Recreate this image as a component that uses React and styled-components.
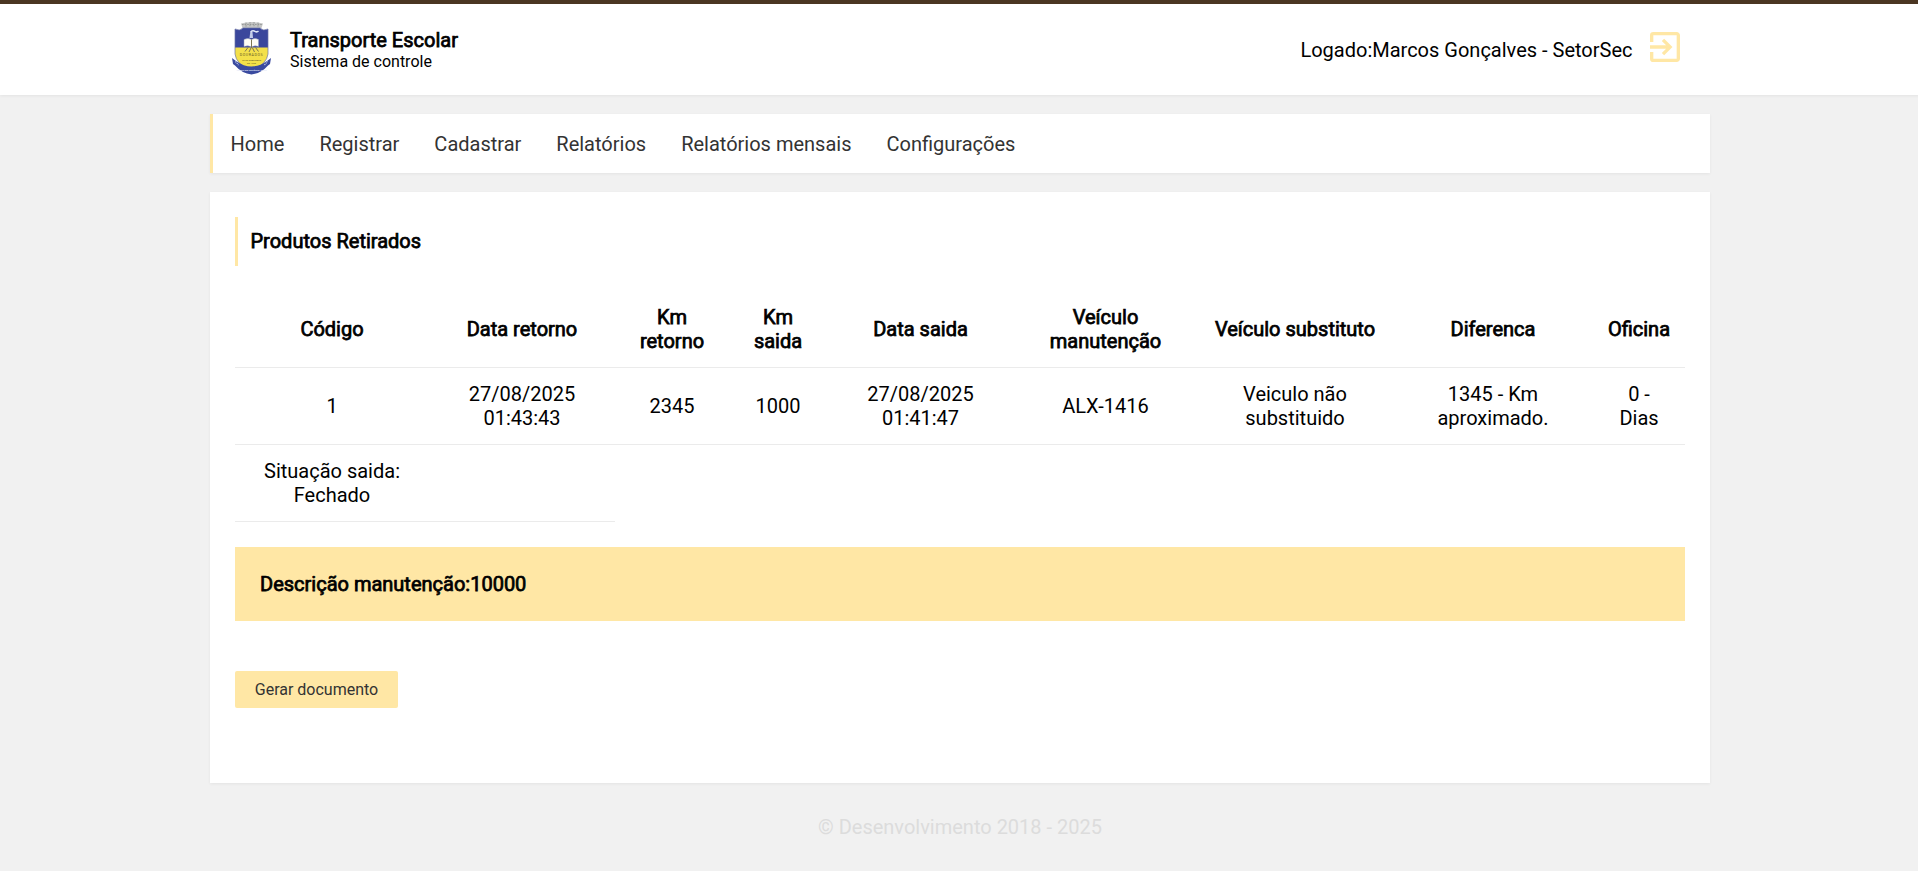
import React from "react";
import styled, { createGlobalStyle } from "styled-components";
import { MdExitToApp } from "react-icons/md";

const colors = {
  brown: "#4b3622",
  accent: "#ffe7a5",
  page: "#f1f1f1",
  line: "#ebebeb",
};

const GlobalStyle = createGlobalStyle`
  * { box-sizing: border-box; margin: 0; padding: 0; }
  html, body { background: ${colors.page}; overflow: hidden; }
  body {
    font-family: Roboto, "Liberation Sans", sans-serif;
    font-size: 20px;
    line-height: 24px;
    color: #000;
  }
`;

const Page = styled.div`
  width: 1920px;
  min-height: 871px;
`;

const Container = styled.div`
  width: 1500px;
  margin: 0 auto;
`;

const Header = styled.header`
  height: 95px;
  background: #fff;
  border-top: 4px solid ${colors.brown};
  box-shadow: 0 1px 3px rgba(0, 0, 0, 0.06);
`;

const HeaderRow = styled(Container)`
  display: flex;
  justify-content: space-between;
  align-items: flex-start;
  padding: 0 25px 0 20px;
`;

const Brand = styled.div`
  display: flex;
  gap: 16px;
  padding-top: 16px;
`;

const Crest = styled.svg`
  width: 44px;
  height: 56px;
`;

const Strong = styled.strong`
  font-weight: 400;
  -webkit-text-stroke: 0.75px currentColor;
`;

const BrandText = styled.div`
  padding-top: 8px;
  strong { display: block; }
`;

const BrandSub = styled.span`
  display: block;
  font-size: 16px;
  line-height: 19px;
`;

const User = styled.div`
  display: flex;
  gap: 12.5px;
  padding-top: 23px;
`;

const UserName = styled.span`
  padding-top: 11px;
`;

const ExitIcon = styled(MdExitToApp)`
  width: 40px;
  height: 40px;
  color: ${colors.accent};
`;

const Panel = styled(Container)`
  margin-top: 19px;
  background: #fff;
  box-shadow: 0 1px 3px rgba(0, 0, 0, 0.06);
`;

const Nav = styled(Panel).attrs({ as: "nav" })`
  display: flex;
  align-items: center;
  gap: 35px;
  height: 59px;
  padding-left: 17.6px;
  border-left: 3px solid ${colors.accent};
`;

const NavLink = styled.a`
  color: #333;
`;

const Content = styled(Panel).attrs({ as: "main" })`
  height: 591px;
  padding: 25px;
`;

const Title = styled.h1`
  height: 49px;
  padding: 12px 12.5px;
  border-left: 3px solid ${colors.accent};
  font-size: 20px;
  font-weight: 400;
`;

const Table = styled.table`
  width: 1450px;
  margin-top: 25px;
  table-layout: fixed;
  border-spacing: 0;
  text-align: center;
`;

const Cell = styled.td`
  height: 77px;
  vertical-align: middle;
  font-weight: 400;
  white-space: pre-line;
  border-bottom: 1px solid ${colors.line};
`;

const Description = styled.div`
  height: 74px;
  margin-top: 25px;
  padding: 25px;
  background: ${colors.accent};
`;

const Button = styled.button`
  display: block;
  width: 163px;
  height: 37px;
  margin-top: 50px;
  border: 0;
  border-radius: 2px;
  background: ${colors.accent};
  color: #333;
  font: 16px Roboto, "Liberation Sans", sans-serif;
`;

const Footer = styled.footer`
  margin-top: 32px;
  text-align: center;
  color: #dcdcdc;
`;

const links = ["Home", "Registrar", "Cadastrar", "Relatórios", "Relatórios mensais", "Configurações"];

const columns = [
  { width: 194, title: "Código", value: "1" },
  { width: 186, title: "Data retorno", value: "27/08/2025\n01:43:43" },
  { width: 114, title: "Km\nretorno", value: "2345" },
  { width: 98, title: "Km\nsaida", value: "1000" },
  { width: 187, title: "Data saida", value: "27/08/2025\n01:41:47" },
  { width: 183, title: "Veículo\nmanutenção", value: "ALX-1416" },
  { width: 196, title: "Veículo substituto", value: "Veiculo não\nsubstituido" },
  { width: 200, title: "Diferenca", value: "1345 - Km\naproximado." },
  { width: 92, title: "Oficina", value: "0 -\nDias" },
];

function CityCrest() {
  return (
    <Crest viewBox="0 0 44 56" aria-label="Brasão">
      <path d="M11 3.5 L16 2.5 L22 2 L28 2.5 L33 3.5 L31.5 8 H12.5 Z" fill="#c4c5c4" />
      <path d="M12 4.5 H32 M16 2.5 V7 M20 2 V7 M24 2 V7 M28 2.5 V7" stroke="#8b8f8e" strokeWidth="0.8" strokeDasharray="1.6 1" />
      <path d="M5 9 Q10 11.5 13 8 H30 Q33 11.5 38 9 V28 H5 Z" fill="#3a479c" />
      <path d="M5 27.5 H38 V34 Q37 44 21.5 51 Q6 44 5 34 Z" fill="#f3e04a" />
      <path d="M5 9 Q10 11.5 13 8 H30 Q33 11.5 38 9 V34 Q37 44 21.5 51 Q6 44 5 34 Z" fill="none" stroke="#6a73a6" strokeWidth="0.7" />
      <path d="M19.5 18 L20.3 12 H22.5 L23 18 Z" fill="#c1cbe9" />
      <path d="M20.5 12 Q23 9.8 25 11.4 Q27 12.5 28.5 11" fill="none" stroke="#dfe7f7" strokeWidth="1.5" />
      <path d="M14 19.5 Q18 17.5 21.5 19.5 Q25 17.5 28.5 19.5 V26.5 Q25 25 21.5 27 Q18 25 14 26.5 Z" fill="#fffef6" stroke="#98a2ba" strokeWidth="0.5" />
      <path d="M21.5 19.5 V28 M18 27.5 L15 31.5 M21 28 L19 32 M22.5 28 L24.5 32 M25.5 27.5 L28.5 31.5" fill="none" stroke="#7d7654" strokeWidth="1" />
      <text x="21.6" y="35.8" textAnchor="middle" fontSize="3.6" letterSpacing="0.6" fill="#675c24">DOURADOS</text>
      <text x="21.5" y="41" textAnchor="middle" fontSize="2.4" fill="#675c24">20 DE DEZEMBRO</text>
      <text x="21.5" y="44" textAnchor="middle" fontSize="2.4" fill="#675c24">DE 1935</text>
      <path d="M2 38 L6 41 Q21.5 52 37 41 L41 38 L40 44 L38 45.5 Q31 53.5 21.5 54.5 Q12 53.5 5 45.5 L3 44 Z" fill="#3a4a9f" />
      <text x="21.6" y="51" textAnchor="middle" fontSize="2.5" fontWeight="700" fill="#e3e8f7">TERRA DE ANTÔNIO JOÃO</text>
      <path d="M5.5 41.5 L8.5 45 M34.5 45 L37.5 41.5" stroke="#c7cfea" strokeWidth="1.2" strokeDasharray="1.2 0.8" />
    </Crest>
  );
}

export default function App() {
  return (
    <Page>
      <GlobalStyle />
      <Header>
        <HeaderRow>
          <Brand>
            <CityCrest />
            <BrandText>
              <Strong>Transporte Escolar</Strong>
              <BrandSub>Sistema de controle</BrandSub>
            </BrandText>
          </Brand>
          <User>
            <UserName>Logado:Marcos Gonçalves - SetorSec</UserName>
            <ExitIcon />
          </User>
        </HeaderRow>
      </Header>
      <Nav>
        {links.map((link) => (
          <NavLink key={link}>{link}</NavLink>
        ))}
      </Nav>
      <Content>
        <Title><Strong>Produtos Retirados</Strong></Title>
        <Table>
          <colgroup>
            {columns.map((c) => (
              <col key={c.title} width={c.width} />
            ))}
          </colgroup>
          <thead>
            <tr>
              {columns.map((c) => (
                <Cell as="th" key={c.title}><Strong>{c.title}</Strong></Cell>
              ))}
            </tr>
          </thead>
          <tbody>
            <tr>
              {columns.map((c) => (
                <Cell key={c.title}>{c.value}</Cell>
              ))}
            </tr>
            <tr>
              <Cell>{"Situação saida:\nFechado"}</Cell>
              <Cell />
            </tr>
          </tbody>
        </Table>
        <Description><Strong>Descrição manutenção:10000</Strong></Description>
        <Button>Gerar documento</Button>
      </Content>
      <Footer>© Desenvolvimento 2018 - 2025</Footer>
    </Page>
  );
}
